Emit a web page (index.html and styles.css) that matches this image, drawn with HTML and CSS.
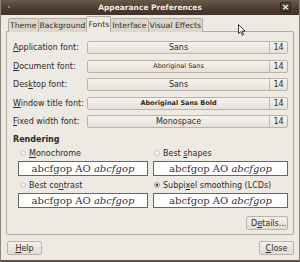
FILE: index.html
```html
<!DOCTYPE html>
<html lang="en">
<head>
  <meta charset="UTF-8">
  <title>Appearance Preferences</title>
  <link rel="stylesheet" href="styles.css">
</head>
<body>
  <div class="window">
    <!-- Title bar -->
    <div class="titlebar">
      <span class="menu-dot"></span>
      <span class="title">Appearance Preferences</span>
      <span class="close-btn">&#215;</span>
    </div>

    <div class="content">
      <!-- Notebook tabs -->
      <div class="tabs">
        <div class="tab first">Theme</div>
        <div class="tab">Background</div>
        <div class="tab active">Fonts</div>
        <div class="tab">Interface</div>
        <div class="tab">Visual Effects</div>
      </div>

      <div class="panel">
        <div class="font-grid">
          <label><u>A</u>pplication font:</label>
          <div class="font-btn"><span class="font-name">Sans</span><span class="font-size">14</span></div>
          <label><u>D</u>ocument font:</label>
          <div class="font-btn"><span class="font-name small">Aboriginal Sans</span><span class="font-size">14</span></div>
          <label>Des<u>k</u>top font:</label>
          <div class="font-btn"><span class="font-name">Sans</span><span class="font-size">14</span></div>
          <label><u>W</u>indow title font:</label>
          <div class="font-btn"><span class="font-name small bold">Aboriginal Sans Bold</span><span class="font-size">14</span></div>
          <label><u>F</u>ixed width font:</label>
          <div class="font-btn"><span class="font-name">Monospace</span><span class="font-size">14</span></div>
        </div>

        <h3>Rendering</h3>
        <div class="render-grid">
          <div class="option">
            <div class="radio-row"><span class="radio"></span><span><u>M</u>onochrome</span></div>
            <div class="sample">abcfgop AO <i>abcfgop</i></div>
          </div>
          <div class="option right">
            <div class="radio-row"><span class="radio"></span><span>Best <u>s</u>hapes</span></div>
            <div class="sample">abcfgop AO <i>abcfgop</i></div>
          </div>
          <div class="option">
            <div class="radio-row"><span class="radio"></span><span>Best co<u>n</u>trast</span></div>
            <div class="sample">abcfgop AO <i>abcfgop</i></div>
          </div>
          <div class="option right">
            <div class="radio-row"><span class="radio checked"></span><span>Subpi<u>x</u>el smoothing (LCDs)</span></div>
            <div class="sample">abcfgop AO <i>abcfgop</i></div>
          </div>
        </div>

        <div class="details-row">
          <button class="btn details">D<u>e</u>tails...</button>
        </div>
      </div>

      <div class="footer">
        <button class="btn wide"><u>H</u>elp</button>
        <button class="btn wide"><u>C</u>lose</button>
      </div>
    </div>

    <!-- mouse pointer -->
    <svg class="cursor" width="8" height="12" viewBox="0 0 8 12">
      <path d="M0.5 0.5 L0.5 9.5 L2.7 7.6 L4.3 11.2 L5.6 10.6 L4.1 7.1 L7 7.1 Z" fill="#fff" stroke="#222" stroke-width="0.9"/>
    </svg>
  </div>
</body>
</html>
```

FILE: styles.css
```css
* {
  box-sizing: border-box;
}

body {
  margin: 0;
  font-family: "DejaVu Sans", sans-serif;
  font-size: 8px;
  color: #2f2a25;
  background: #fff;
}

.window {
  position: relative;
  width: 300px;
  height: 262px;
  background: #ede9e3;
  border-left: 1px solid #8c857c;
  border-right: 1px solid #8c857c;
  border-bottom: 2px solid #5a5048;
  overflow: hidden;
}

.titlebar {
  height: 15px;
  background: linear-gradient(#6b594a, #4a3c31 60%, #3f332a);
  display: flex;
  align-items: center;
  justify-content: center;
  position: relative;
  margin: 0 -1px;
}

.title {
  color: #f2ede6;
  font-weight: bold;
  font-size: 7.5px;
}

.menu-dot {
  position: absolute;
  left: 8px;
  top: 6px;
  width: 2px;
  height: 2px;
  background: #9a8e83;
  border-radius: 1px;
}

.close-btn {
  position: absolute;
  right: 9px;
  top: 2px;
  width: 11px;
  height: 10px;
  line-height: 10px;
  text-align: center;
  color: #fff;
  font-size: 9px;
  font-weight: bold;
  border-radius: 2px;
  background: linear-gradient(#5e4e42, #3b3028);
  box-shadow: inset 0 0 0 1px #2e251f;
}

.content {
  padding: 1px 5px 0 5px;
}

.tabs {
  display: flex;
  align-items: flex-end;
  height: 16px;
  padding-left: 2px;
  margin-bottom: -1px;
  position: relative;
  z-index: 1;
}

.tab {
  height: 14px;
  line-height: 13px;
  padding: 0 1px;
  font-size: 7.7px;
  background: #dcd6cd;
  border: 1px solid #b3aa9e;
  border-bottom: none;
  border-left: none;
  border-radius: 2px 2px 0 0;
}

.tab.first {
  border-left: 1px solid #b3aa9e;
}

.tab.active {
  height: 16px;
  line-height: 15px;
  background: #ede9e3;
  border-left: 1px solid #b3aa9e;
  margin-left: -1px;
}

.panel {
  border: 1px solid #b3aa9e;
  border-radius: 0 2px 2px 2px;
  height: 204px;
  padding: 9px 5px 0 6px;
}

.font-grid {
  display: grid;
  grid-template-columns: 74px 1fr;
  grid-auto-rows: 13px;
  row-gap: 5.5px;
  align-items: center;
}

.font-grid label {
  white-space: nowrap;
}

.font-btn {
  display: flex;
  height: 13px;
  border: 1px solid #bcb3a8;
  border-radius: 2px;
  background: linear-gradient(#f6f3ef, #e6e0d8);
  align-items: center;
}

.font-name {
  flex: 1;
  text-align: center;
  border-right: 1px solid #c2b9ae;
  line-height: 11px;
}

.font-name.small {
  font-size: 6.5px;
}

.font-name.bold {
  font-weight: bold;
}

.font-size {
  width: 17px;
  text-align: center;
}

h3 {
  font-size: 8px;
  font-weight: bold;
  line-height: 10px;
  margin: 7px 0 3px 0;
}

.render-grid {
  display: grid;
  grid-template-columns: 130px 1fr;
  column-gap: 5px;
  row-gap: 4px;
  padding-left: 5px;
}

.radio-row {
  display: flex;
  align-items: center;
  height: 10px;
  padding-left: 2px;
}

.option.right .radio-row {
  padding-left: 1px;
}

.radio {
  width: 6px;
  height: 6px;
  border-radius: 50%;
  border: 1px solid #cdc5ba;
  background: #f7f4f0;
  margin-right: 3px;
}

.radio.checked {
  background: radial-gradient(#6a4a3a 40%, #f5f2ee 60%);
  border-color: #a89d90;
}

.sample {
  margin-top: 3px;
  height: 15px;
  line-height: 13px;
  background: #fff;
  border: 1px solid #6a645d;
  font-family: "DejaVu Serif", serif;
  font-size: 10px;
  color: #333;
  text-align: center;
}

.details-row {
  display: flex;
  justify-content: flex-end;
  margin-top: 8px;
}

.btn {
  font-family: "DejaVu Sans", sans-serif;
  font-size: 8px;
  color: #2f2a25;
  height: 14px;
  padding: 0 4px;
  border: 1px solid #bcb3a8;
  border-radius: 2px;
  background: linear-gradient(#f4f1ec, #e2dcd3);
}

.btn.details {
  width: 42px;
}

.btn.wide {
  width: 35px;
}

.footer {
  display: flex;
  justify-content: space-between;
  margin-top: 6px;
  padding: 0 0 0 1px;
}

.cursor {
  position: absolute;
  left: 237px;
  top: 24px;
}
```
